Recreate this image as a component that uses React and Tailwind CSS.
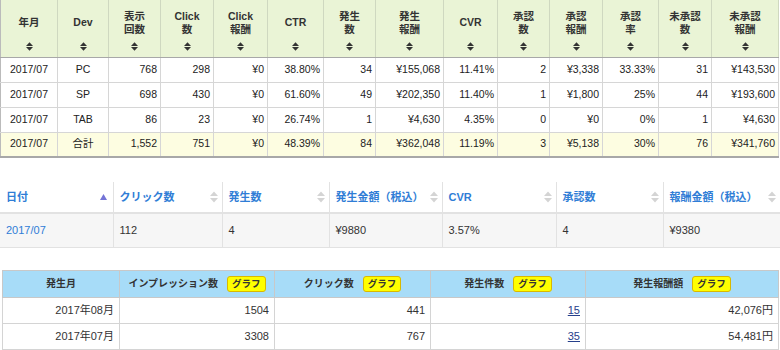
import React from 'react';

const font = { fontFamily: '"Liberation Sans", "Noto Sans CJK JP", sans-serif' };

const SortBoth = ({ className = 'fill-[#333]' }) => (
    <svg width="7" height="9" viewBox="0 0 7 9" className={className}>
        <polygon points="0,4 3.5,0.3 7,4" />
        <polygon points="0,5 3.5,8.7 7,5" />
    </svg>
);

const SortGrey = () => (
    <svg width="8" height="12" viewBox="0 0 8 12" className="fill-[#d4d4d4]">
        <polygon points="0,5 4,0.5 8,5" />
        <polygon points="0,7 4,11.5 8,7" />
    </svg>
);

// table 1: device report
const t1Widths = ['w-[57px]', 'w-[51px]', 'w-[52px]', 'w-[53px]', 'w-[54px]', 'w-[56px]', 'w-[52px]', 'w-[68px]', 'w-[54px]', 'w-[52px]', 'w-[53px]', 'w-[56px]', 'w-[53px]', 'w-[67px]'];
const t1Head = [
    ['年月'], ['Dev'], ['表示', '回数'], ['Click', '数'], ['Click', '報酬'], ['CTR'], ['発生', '数'],
    ['発生', '報酬'], ['CVR'], ['承認', '数'], ['承認', '報酬'], ['承認', '率'], ['未承認', '数'], ['未承認', '報酬'],
];
const t1Rows = [
    ['2017/07', 'PC', '768', '298', '¥0', '38.80%', '34', '¥155,068', '11.41%', '2', '¥3,338', '33.33%', '31', '¥143,530'],
    ['2017/07', 'SP', '698', '430', '¥0', '61.60%', '49', '¥202,350', '11.40%', '1', '¥1,800', '25%', '44', '¥193,600'],
    ['2017/07', 'TAB', '86', '23', '¥0', '26.74%', '1', '¥4,630', '4.35%', '0', '¥0', '0%', '1', '¥4,630'],
    ['2017/07', '合計', '1,552', '751', '¥0', '48.39%', '84', '¥362,048', '11.19%', '3', '¥5,138', '30%', '76', '¥341,760'],
];

const t2Head = ['日付', 'クリック数', '発生数', '発生金額（税込）', 'CVR', '承認数', '報酬金額（税込）'];
const t2Widths = ['w-[113px]', 'w-[109px]', 'w-[107px]', 'w-[113px]', 'w-[114px]', 'w-[107px]', 'w-[117px]'];
const t2Row = ['2017/07', '112', '4', '¥9880', '3.57%', '4', '¥9380'];

const t3Rows = [
    ['2017年08月', '1504', '441', '15', '42,076円'],
    ['2017年07月', '3308', '767', '35', '54,481円'],
];
const t3Widths = ['w-[117px]', 'w-[155px]', 'w-[156px]', 'w-[155px]', 'w-[193px]'];

const Badge = () => (
    <span className="inline-flex items-center justify-center h-[16px] px-[4px] rounded-[3px] border border-[#d9b800] bg-[#ffff00] text-[9.5px] font-bold text-[#333] leading-none">
        グラフ
    </span>
);

export default function App() {
    return (
        <div className="w-[780px] h-[350px] overflow-hidden bg-white text-[#222]" style={font}>
            {/* device table */}
            <table className="table-fixed border-collapse w-[778px] text-[10.5px] border-l border-r border-[#bbb] border-b-2 border-b-[#a8a8a8]">
                <colgroup>
                    {t1Widths.map((w, i) => <col key={i} className={w} />)}
                </colgroup>
                <thead>
                    <tr className="bg-[#eaf4d6] h-[57px]">
                        {t1Head.map((h, i) => (
                            <th key={i} className="border-r border-[#cfd8c0] border-b border-b-[#a8a8a8] p-0 font-bold text-[#333] align-top">
                                <div className="flex flex-col items-center h-[56px]">
                                    <div className="flex-1 flex flex-col justify-center leading-[13px] pt-[3px]">
                                        {h.map((l, j) => <span key={j}>{l}</span>)}
                                    </div>
                                    <div className="pb-[5px]"><SortBoth /></div>
                                </div>
                            </th>
                        ))}
                    </tr>
                </thead>
                <tbody>
                    {t1Rows.map((r, i) => (
                        <tr key={i} className={`h-[25px] ${i === 3 ? 'bg-[#fdfde1]' : 'bg-white'}`}>
                            {r.map((c, j) => (
                                <td key={j} className={`border-r border-b border-[#d6d6d6] px-[3px] ${j < 2 ? 'text-center' : 'text-right'}`}>
                                    {c}
                                </td>
                            ))}
                        </tr>
                    ))}
                </tbody>
            </table>

            {/* summary table */}
            <table className="table-fixed border-collapse w-[780px] mt-[24px] text-[11px]">
                <colgroup>
                    {t2Widths.map((w, i) => <col key={i} className={w} />)}
                </colgroup>
                <thead>
                    <tr className="h-[31px]">
                        {t2Head.map((h, i) => (
                            <th key={i} className={`p-0 pl-[6px] pr-[4px] text-left font-bold text-[#2f7dd6] border-b-2 border-[#e2e2e2] ${i < 6 ? 'border-r' : ''}`}>
                                <div className="flex items-center justify-between">
                                    <span>{h}</span>
                                    {i === 0 ? (
                                        <svg width="7" height="6" viewBox="0 0 7 6" className="fill-[#7474d6] mr-[2px]">
                                            <polygon points="0,6 3.5,0 7,6" />
                                        </svg>
                                    ) : <SortGrey />}
                                </div>
                            </th>
                        ))}
                    </tr>
                </thead>
                <tbody>
                    <tr className="h-[34px] bg-[#f6f6f6]">
                        {t2Row.map((c, i) => (
                            <td key={i} className={`pl-[6px] border-b border-[#e2e2e2] ${i === 0 ? 'text-[#2f7dd6]' : 'text-[#333]'} ${i < 6 ? 'border-r' : ''}`}>
                                {c}
                            </td>
                        ))}
                    </tr>
                </tbody>
            </table>

            {/* monthly table */}
            <table className="table-fixed border-collapse w-[776px] ml-[2px] mt-[22px] text-[11px] border border-[#ccc]">
                <colgroup>
                    {t3Widths.map((w, i) => <col key={i} className={w} />)}
                </colgroup>
                <thead>
                    <tr className="h-[27px] bg-[#a7dcf8]">
                        <th className="border border-[#c8c8c8] font-bold text-[10px] text-[#333] p-0">発生月</th>
                        {['インプレッション数', 'クリック数', '発生件数', '発生報酬額'].map((h, i) => (
                            <th key={i} className="border border-[#c8c8c8] font-bold text-[10px] text-[#333] p-0">
                                <div className="flex items-center justify-center gap-[9px]">
                                    <span>{h}</span>
                                    <Badge />
                                </div>
                            </th>
                        ))}
                    </tr>
                </thead>
                <tbody>
                    {t3Rows.map((r, i) => (
                        <tr key={i} className="h-[26px]">
                            {r.map((c, j) => (
                                <td key={j} className="border border-[#d4d4d4] text-right pr-[5px] text-[#333]">
                                    {j === 3 ? <span className="underline text-[#27408b]">{c}</span> : c}
                                </td>
                            ))}
                        </tr>
                    ))}
                </tbody>
            </table>
        </div>
    );
}
